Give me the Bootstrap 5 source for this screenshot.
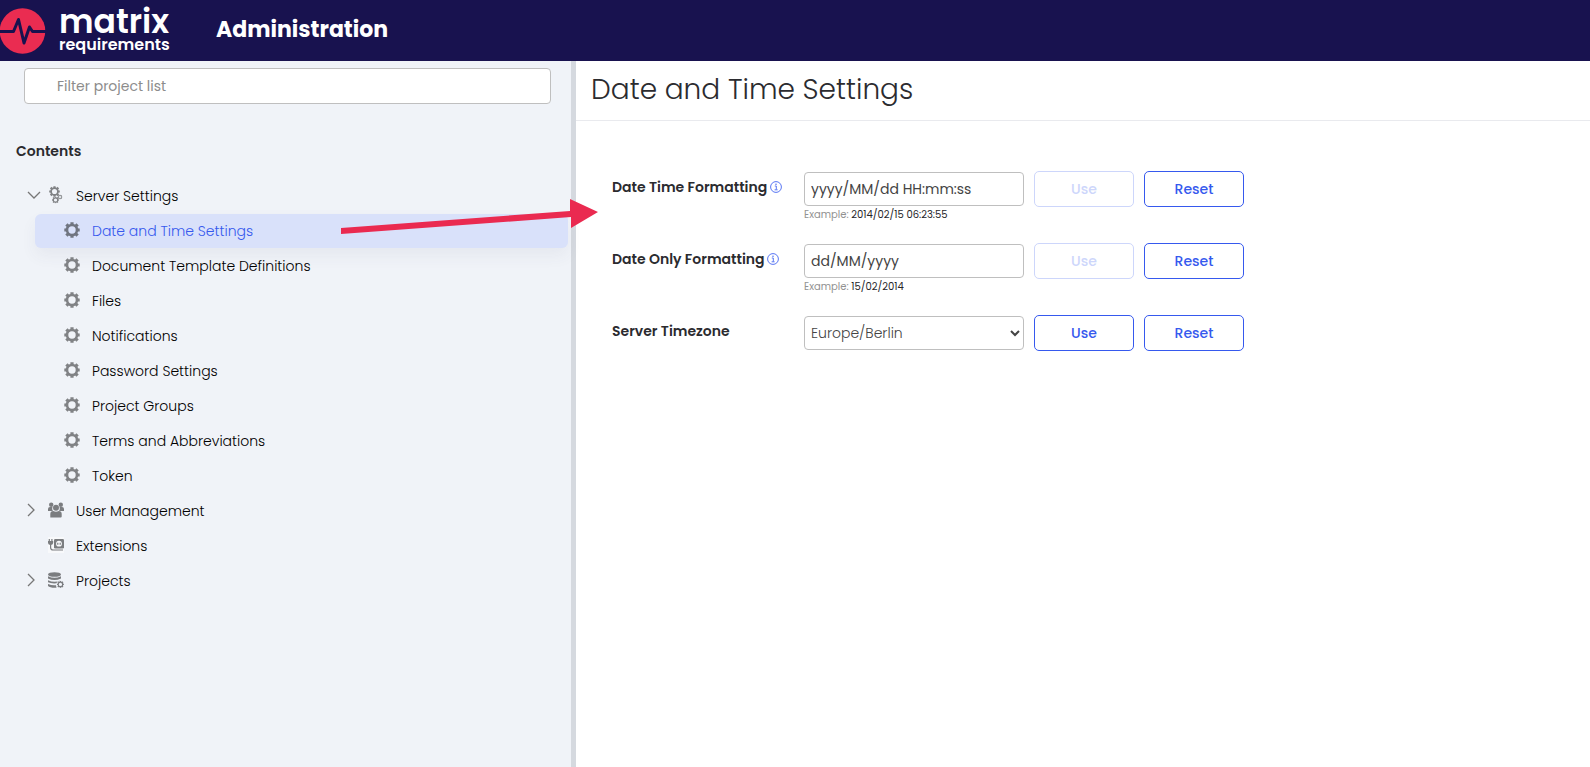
<!DOCTYPE html>
<html lang="en">
<head>
<meta charset="utf-8">
<meta name="viewport" content="width=device-width, initial-scale=1">
<title>Administration</title>
<link href="https://cdn.jsdelivr.net/npm/bootstrap@5.3.0/dist/css/bootstrap.min.css" rel="stylesheet">
<style>
  body { font-family: Poppins, Inter, "Open Sans", sans-serif; font-size: 14px; line-height: 20px; color: #2b2b2f; background: #fff; }
  .topbar { background: #18124f; height: 61px; flex: none; }
  .brand { width: 216px; color: #fff; }
  .brand:hover { color: #fff; }
  .brand-word { margin-left: 13px; }
  .brand-top { font-size: 33px; line-height: 28px; font-weight: 600; }
  .brand-sub { font-size: 16px; line-height: 18px; font-weight: 600; }
  .app-title { font-size: 22px; line-height: 28px; font-weight: 700; color: #fff; padding-bottom: 2px; }
  .side { width: 576px; max-width: 40%; flex: none; background: #f0f3f8; border-right: 5px solid #d5d9df; }
  .filter { height: 36px; margin: 7px 20px 0 24px; width: auto; border: 1px solid #bfbfbf; border-radius: 4px; padding: 0 32px; }
  .filter::placeholder { color: #8c8c8c; }
  .side-title { font-size: 14px; line-height: 20px; font-weight: 600; margin: 37px 16px 0; }
  .tree { margin-top: 18px; }
  .tree a { display: flex; align-items: center; height: 34px; margin-bottom: 1px; color: #000; font-weight: 300; text-decoration: none; border-radius: 6px; }
  .tree > li > a { padding-left: 26px; }
  .tree .chev { width: 22px; flex: none; }
  .tree .ico { width: 28px; flex: none; }
  .tree ul a { margin-left: 35px; margin-right: 3px; padding-left: 29px; }
  .tree ul a.current { background: #d9e1fa; color: #3659ee; box-shadow: 0 8px 16px rgba(60,70,110,.06); }
  .tree svg { display: block; margin-bottom: 2px; }
  .page-head { height: 60px; border-bottom: 1px solid #e9eaee; padding: 11px 15px 0; }
  .page-head h1 { font-size: 28px; line-height: 36px; font-weight: 300; margin: 0; }
  .settings { padding: 50px 36px; }
  .setting { display: grid; grid-template-columns: 182px 220px 100px 100px; column-gap: 10px; height: 72px; }
  .setting-label { font-weight: 600; padding-top: 6px; white-space: nowrap; }
  .setting-label svg { margin: -3px 0 0 -1px; }
  .field { height: 34px; margin-top: 1px; border: 1px solid #bfbfbf; border-radius: 4px; padding: 0 6px; color: #444; background-color: #fff; }
  .zone { font-weight: 300; padding-left: 2px; width: 100%; }
  .example { font-size: 10px; line-height: 18px; color: #929292; white-space: nowrap; }
  .example b { font-weight: 400; color: #26262a; }
  .act { --bs-btn-color: #3659ee; --bs-btn-border-color: #3659ee; --bs-btn-bg: #fff; --bs-btn-disabled-color: #cdd6fb; --bs-btn-disabled-border-color: #cdd6fb; --bs-btn-disabled-bg: #fff; --bs-btn-disabled-opacity: 1; height: 36px; padding: 0; font-size: 14px; font-weight: 500; border-radius: 5px; }
  .pointer { left: 341px; top: 138px; pointer-events: none; }
</style>
</head>
<body class="d-flex flex-column min-vh-100">
<svg class="d-none" aria-hidden="true">
  <symbol id="gear" viewBox="0 0 16 16"><circle cx="8" cy="8" r="5" fill="none" stroke="currentColor" stroke-width="2.6"/><path d="M8 .3v2.500M8 13.200v2.500M.3 8h2.500M13.200 8h2.500M2.400 2.400l2 2M11.600 11.600l2 2M2.400 13.600l2-2M11.600 4.400l2-2" stroke="currentColor" stroke-width="3.2"/></symbol>
  <symbol id="info" viewBox="0 0 12 12"><circle cx="6" cy="6" r="5.4" fill="none" stroke="#5876f3"/><path d="M4.8 5h1.5v3.6M4.6 8.8h3" fill="none" stroke="#5876f3"/><circle cx="6" cy="3.2" r=".8" fill="#5876f3"/></symbol>
</svg>

<header class="topbar d-flex align-items-center">
  <a href="#" class="brand d-flex align-items-center text-decoration-none">
    <svg width="46" height="46" viewBox="0 0 46 46" aria-hidden="true"><circle cx="22.5" cy="23" r="22.8" fill="#ea2c51"/><path d="M0 23.500h13.500l5-12L24 35l5.500-16 3 4.500H46" fill="none" stroke="#18124f" stroke-width="3" stroke-linejoin="round"/></svg>
    <span class="brand-word d-flex flex-column"><span class="brand-top">matrix</span><span class="brand-sub">requirements</span></span>
  </a>
  <span class="app-title">Administration</span>
</header>

<div class="d-flex flex-grow-1 position-relative">
  <aside class="side d-flex flex-column">
    <input type="text" class="filter" placeholder="Filter project list" aria-label="Filter project list">
    <h2 class="side-title">Contents</h2>
    <ul class="tree list-unstyled">
      <li>
        <a href="#"><span class="chev"><svg width="16" height="16" viewBox="0 0 16 16" fill="none" stroke="#777" stroke-width="1.300"><path d="M2 5l6 6 6-6"/></svg></span><span class="ico"><svg width="16" height="18" viewBox="0 0 16 18" color="#808285"><use href="#gear" x="1" y="0" width="11" height="11"/><use href="#gear" x="4" y="10.500" width="7" height="7"/><use href="#gear" x="9.500" y="8.500" width="5" height="5"/></svg></span>Server Settings</a>
        <ul class="list-unstyled">
          <li><a href="#" class="current"><span class="ico"><svg width="16" height="16" color="#707580"><use href="#gear"/></svg></span>Date and Time Settings</a></li>
          <li><a href="#"><span class="ico"><svg width="16" height="16" color="#808285"><use href="#gear"/></svg></span>Document Template Definitions</a></li>
          <li><a href="#"><span class="ico"><svg width="16" height="16" color="#808285"><use href="#gear"/></svg></span>Files</a></li>
          <li><a href="#"><span class="ico"><svg width="16" height="16" color="#808285"><use href="#gear"/></svg></span>Notifications</a></li>
          <li><a href="#"><span class="ico"><svg width="16" height="16" color="#808285"><use href="#gear"/></svg></span>Password Settings</a></li>
          <li><a href="#"><span class="ico"><svg width="16" height="16" color="#808285"><use href="#gear"/></svg></span>Project Groups</a></li>
          <li><a href="#"><span class="ico"><svg width="16" height="16" color="#808285"><use href="#gear"/></svg></span>Terms and Abbreviations</a></li>
          <li><a href="#"><span class="ico"><svg width="16" height="16" color="#808285"><use href="#gear"/></svg></span>Token</a></li>
        </ul>
      </li>
      <li><a href="#"><span class="chev"><svg width="12" height="16" viewBox="0 0 12 16" fill="none" stroke="#777" stroke-width="1.300"><path d="M2 2l6 6-6 6"/></svg></span><span class="ico"><svg width="16" height="16" viewBox="0 0 16 16" fill="#7b7d80"><circle cx="3.2" cy="2.8" r="2.2"/><circle cx="12.8" cy="2.8" r="2.2"/><path d="M0 9V7q0-2 2-2h2.500q-.8 2.500.5 4zM16 9V7q0-2-2-2h-2.500q.8 2.500-.5 4z"/><circle cx="8" cy="5.700" r="3"/><path d="M2.300 15.500V12q0-3 3-3Q8 10.600 10.700 9q3 0 3 3v2.500q0 1-1 1z"/></svg></span>User Management</a></li>
      <li><a href="#"><span class="chev"></span><span class="ico"><svg width="16" height="16" viewBox="0 0 16 16"><path d="M0 0h16v16H0z" fill="#f8f9fb"/><path d="M1.300 2v3M3.900 2v3M2.600 7v3.500q0 2.500 2.500 2.500H15" fill="none" stroke="#7b7d80" stroke-width="1.200"/><path d="M0 4h5.200v2q-.3 2-2.600 2T0 6z" fill="#7b7d80"/><rect x="6" y="2" width="10" height="9.500" rx="1.200" fill="#7b7d80"/><circle cx="11" cy="6.700" r="2.900" fill="#f8f9fb"/><path d="M9.800 5.700v2M12.200 5.700v2" stroke="#7b7d80" stroke-width="1.200"/></svg></span>Extensions</a></li>
      <li><a href="#"><span class="chev"><svg width="12" height="16" viewBox="0 0 12 16" fill="none" stroke="#777" stroke-width="1.300"><path d="M2 2l6 6-6 6"/></svg></span><span class="ico"><svg width="16" height="16" viewBox="0 0 16 16" fill="#7b7d80" color="#7b7d80"><ellipse cx="6.500" cy="2.500" rx="6.500" ry="2.300"/><path d="M0 4.200q6.500 3 13 0v2.300q-6.500 3-13 0zM0 8.200q6.500 3 13 0-4 .8-4.500 3.100-5.500.4-8.500-1zM0 12q4 1.700 8 1.200l.5 2.500Q2 16 0 14z"/><use href="#gear" x="8.800" y="8.800" width="7.200" height="7.200"/></svg></span>Projects</a></li>
    </ul>
  </aside>

  <main class="flex-grow-1">
    <div class="page-head"><h1>Date and Time Settings</h1></div>
    <form class="settings">
      <div class="setting">
        <label class="setting-label" for="dt">Date Time Formatting <svg width="12" height="12" aria-hidden="true"><use href="#info"/></svg></label>
        <div class="d-flex flex-column"><input id="dt" class="field" type="text" value="yyyy/MM/dd HH:mm:ss"><span class="example">Example: <b>2014/02/15 06:23:55</b></span></div>
        <button type="button" class="btn act" disabled>Use</button>
        <button type="button" class="btn act">Reset</button>
      </div>
      <div class="setting">
        <label class="setting-label" for="d">Date Only Formatting <svg width="12" height="12" aria-hidden="true"><use href="#info"/></svg></label>
        <div class="d-flex flex-column"><input id="d" class="field" type="text" value="dd/MM/yyyy"><span class="example">Example: <b>15/02/2014</b></span></div>
        <button type="button" class="btn act" disabled>Use</button>
        <button type="button" class="btn act">Reset</button>
      </div>
      <div class="setting">
        <label class="setting-label" for="tz">Server Timezone</label>
        <div><select id="tz" class="field zone"><option>Europe/Berlin</option></select></div>
        <button type="button" class="btn act">Use</button>
        <button type="button" class="btn act">Reset</button>
      </div>
    </form>
  </main>
  <svg class="pointer position-absolute" width="258" height="36" viewBox="0 0 258 36" aria-hidden="true"><path d="M0 29L229 12V0L257 13 230 29V18L0 35z" fill="#ea2a50"/></svg>
</div>
<script src="https://cdn.jsdelivr.net/npm/bootstrap@5.3.0/dist/js/bootstrap.bundle.min.js"></script>
</body>
</html>
